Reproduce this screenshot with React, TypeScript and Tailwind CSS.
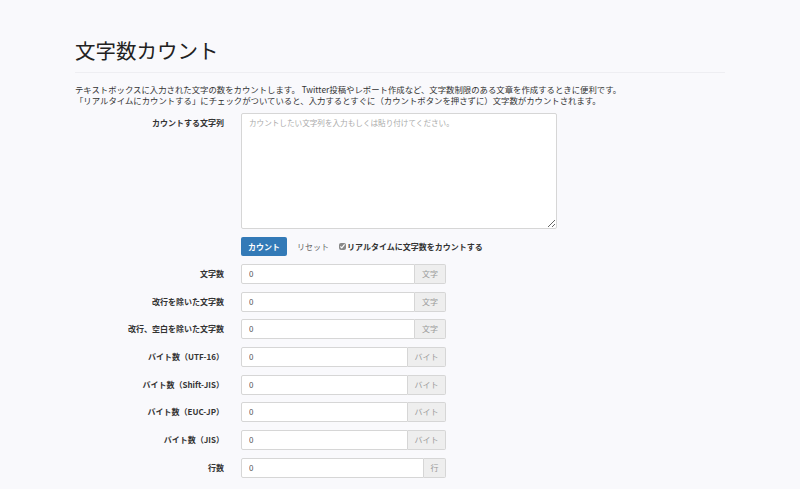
import React, { useState } from 'react';

const font = { fontFamily: '"Noto Sans CJK JP", "Noto Sans", "Liberation Sans", sans-serif' };

interface ResultRow {
  label: string;
  unit: string;
  unitWidth: string;
}

const rows: ResultRow[] = [
  { label: '文字数', unit: '文字', unitWidth: 'w-[31px]' },
  { label: '改行を除いた文字数', unit: '文字', unitWidth: 'w-[31px]' },
  { label: '改行、空白を除いた文字数', unit: '文字', unitWidth: 'w-[31px]' },
  { label: 'バイト数（UTF-16）', unit: 'バイト', unitWidth: 'w-[38px]' },
  { label: 'バイト数（Shift-JIS）', unit: 'バイト', unitWidth: 'w-[38px]' },
  { label: 'バイト数（EUC-JP）', unit: 'バイト', unitWidth: 'w-[38px]' },
  { label: 'バイト数（JIS）', unit: 'バイト', unitWidth: 'w-[38px]' },
  { label: '行数', unit: '行', unitWidth: 'w-[22px]' },
];

export default function App() {
  const [text, setText] = useState('');
  const [realtime, setRealtime] = useState(true);

  return (
    <div className="min-h-[489px] w-[800px] bg-[#f9f9fc] text-[#333]" style={font}>
      <div className="mx-[75px] pt-[35px]">
        <h1 className="text-[20.5px] leading-[30px] font-normal text-[#222]">文字数カウント</h1>
        <div className="mt-[7px] h-px bg-[#eeeef2]" />
        <p className="mt-[11px] text-[8.4px] leading-[11px] text-[#333]">
          テキストボックスに入力された文字の数をカウントします。 Twitter投稿やレポート作成など、文字数制限のある文章を作成するときに便利です。
          <br />
          「リアルタイムにカウントする」にチェックがついていると、入力するとすぐに（カウントボタンを押さずに）文字数がカウントされます。
        </p>

        {/* Textarea */}
        <div className="mt-[7px] flex">
          <label className="w-[149px] pt-[4px] text-right text-[8px] leading-[11px] font-bold">
            カウントする文字列
          </label>
          <textarea
            value={text}
            onChange={(e) => setText(e.target.value)}
            placeholder="カウントしたい文字列を入力もしくは貼り付けてください。"
            className="ml-[17px] h-[116px] w-[316px] rounded-[2px] border border-[#d6d6d6] bg-white px-[7px] py-[3px] text-[7.6px] leading-[11px] placeholder:text-[#aaa] outline-none"
            style={font}
          />
        </div>

        {/* Actions */}
        <div className="mt-[8px] flex h-[19px] items-center pl-[166px]">
          <button className="h-[19px] w-[46px] rounded-[2px] bg-[#337ab7] text-[8px] font-bold text-white">
            カウント
          </button>
          <button className="ml-[10px] text-[8px] text-[#666]">リセット</button>
          <label className="ml-[10px] flex items-center text-[8px] font-bold">
            <input
              type="checkbox"
              checked={realtime}
              onChange={(e) => setRealtime(e.target.checked)}
              className="mr-[1px] h-[7px] w-[7px] accent-[#888]"
            />
            リアルタイムに文字数をカウントする
          </label>
        </div>

        {/* Results */}
        <div className="mt-[8px] flex flex-col gap-[7.7px]">
          {rows.map((row) => (
            <div key={row.label} className="flex h-[20px] items-center">
              <span className="w-[149px] text-right text-[8px] font-bold">{row.label}</span>
              <div className="ml-[17px] flex h-[20px] w-[205px]">
                <input
                  readOnly
                  value="0"
                  className="min-w-0 flex-1 rounded-l-[2px] border border-[#d6d6d6] bg-white px-[7px] text-[8px] text-[#555] outline-none"
                  style={font}
                />
                <span
                  className={`${row.unitWidth} flex items-center justify-center rounded-r-[2px] border border-l-0 border-[#d6d6d6] bg-[#eeeeee] text-[8px] text-[#999]`}
                >
                  {row.unit}
                </span>
              </div>
            </div>
          ))}
        </div>
      </div>
    </div>
  );
}
